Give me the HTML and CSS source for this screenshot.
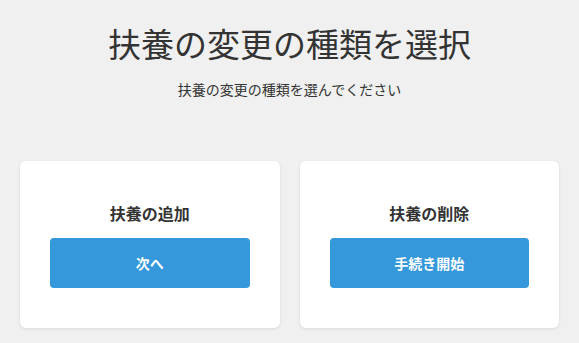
FILE: index.html
```html
<!DOCTYPE html>
<html lang="ja">

<head>
    <meta charset="UTF-8">
    <meta name="viewport" content="width=device-width, initial-scale=1.0">
    <title>扶養の変更の種類を選択</title>
    <link rel="stylesheet" href="styles.css">
</head>

<body>
    <div class="page">
        <div class="page-header">
            <h1>扶養の変更の種類を選択</h1>
            <p class="lead">扶養の変更の種類を選んでください</p>
        </div>

        <!-- 変更の種類 -->
        <div class="option-list">
            <div class="option-card">
                <h3>扶養の追加</h3>
                <button class="option-btn">次へ</button>
            </div>
            <div class="option-card">
                <h3>扶養の削除</h3>
                <button class="option-btn">手続き開始</button>
            </div>
        </div>
    </div>
</body>

</html>
```

FILE: styles.css
```css
body {
    font-family: "Noto Sans CJK JP", "Noto Sans", sans-serif;
    margin: 0;
    background-color: #f0f0f0;
    color: #333;
}

.page {
    padding: 20px;
}

.page-header {
    text-align: center;
}

h1 {
    font-size: 33px;
    font-weight: normal;
    line-height: 40px;
    margin: 3px 0 0;
}

.lead {
    font-size: 14px;
    line-height: 21px;
    margin: 16px 0 0;
}

.option-list {
    display: grid;
    grid-template-columns: 1fr 1fr;
    gap: 20px;
    margin-top: 61px;
}

.option-card {
    background-color: white;
    border-radius: 6px;
    box-shadow: 0 1px 3px rgba(0, 0, 0, 0.1);
    padding: 40px 30px;
    text-align: center;
}

h3 {
    font-size: 16px;
    line-height: 24px;
    margin: 0 0 13px;
}

.option-btn {
    display: block;
    width: 100%;
    height: 50px;
    border: none;
    border-radius: 4px;
    background-color: #3498db;
    color: white;
    font-family: inherit;
    font-size: 14px;
    font-weight: bold;
    cursor: pointer;
}
```
